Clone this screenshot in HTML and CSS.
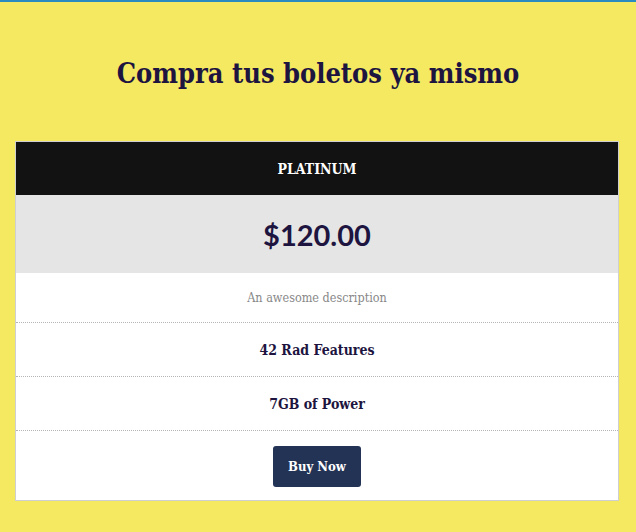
FILE: index.html
```html
<!DOCTYPE html>
<html lang="es">
<head>
<meta charset="utf-8">
<title>Boletos</title>
<link rel="stylesheet" href="styles.css">
</head>
<body>
<div class="page">
  <h1 class="title">Compra tus boletos ya mismo</h1>
  <div class="card">
    <div class="plan">PLATINUM</div>
    <div class="price">$120.00</div>
    <div class="row desc">An awesome description</div>
    <div class="row feature">42 Rad Features</div>
    <div class="row feature">7GB of Power</div>
    <div class="row action"><button class="buy">Buy Now</button></div>
  </div>
</div>
</body>
</html>
```

FILE: styles.css
```css
html, body {
  margin: 0;
  padding: 0;
  background: #f5e961;
}
.page {
  border-top: 2px solid #2a8bc0;
  min-height: 530px;
  font-family: "DejaVu Serif Condensed", "DejaVu Serif", serif;
  color: #1d1440;
}
.title {
  margin: 0;
  padding: 54px 0 49px;
  line-height: 36px;
  font-size: 27px;
  font-weight: bold;
  text-align: center;
  color: #1d1440;
}
.card {
  margin: 0 17px 0 15px;
  border: 1px solid #cfcfcf;
  background: #fff;
  text-align: center;
}
.plan {
  height: 53px;
  display: flex;
  align-items: center;
  justify-content: center;
  background: #121212;
  color: #fff;
  font-size: 14px;
  font-weight: bold;
}
.price {
  height: 78px;
  display: flex;
  align-items: center;
  justify-content: center;
  background: #e5e5e5;
  font-family: Lato, "Open Sans", sans-serif;
  font-weight: bold;
  font-size: 29px;
  color: #1d1440;
}
.row {
  display: flex;
  align-items: center;
  justify-content: center;
}
.desc {
  height: 49px;
  border-bottom: 1px dotted #b5b5b5;
  font-size: 12.5px;
  color: #888;
}
.feature {
  height: 53px;
  border-bottom: 1px dotted #b5b5b5;
  font-size: 14px;
  font-weight: bold;
}
.action {
  height: 69px;
  padding-top: 1px;
  box-sizing: border-box;
}
.buy {
  width: 88px;
  height: 41px;
  border: 0;
  border-radius: 3px;
  background: #223356;
  color: #fff;
  font-family: "DejaVu Serif Condensed", "DejaVu Serif", serif;
  font-size: 13px;
  font-weight: bold;
  cursor: pointer;
}
```
